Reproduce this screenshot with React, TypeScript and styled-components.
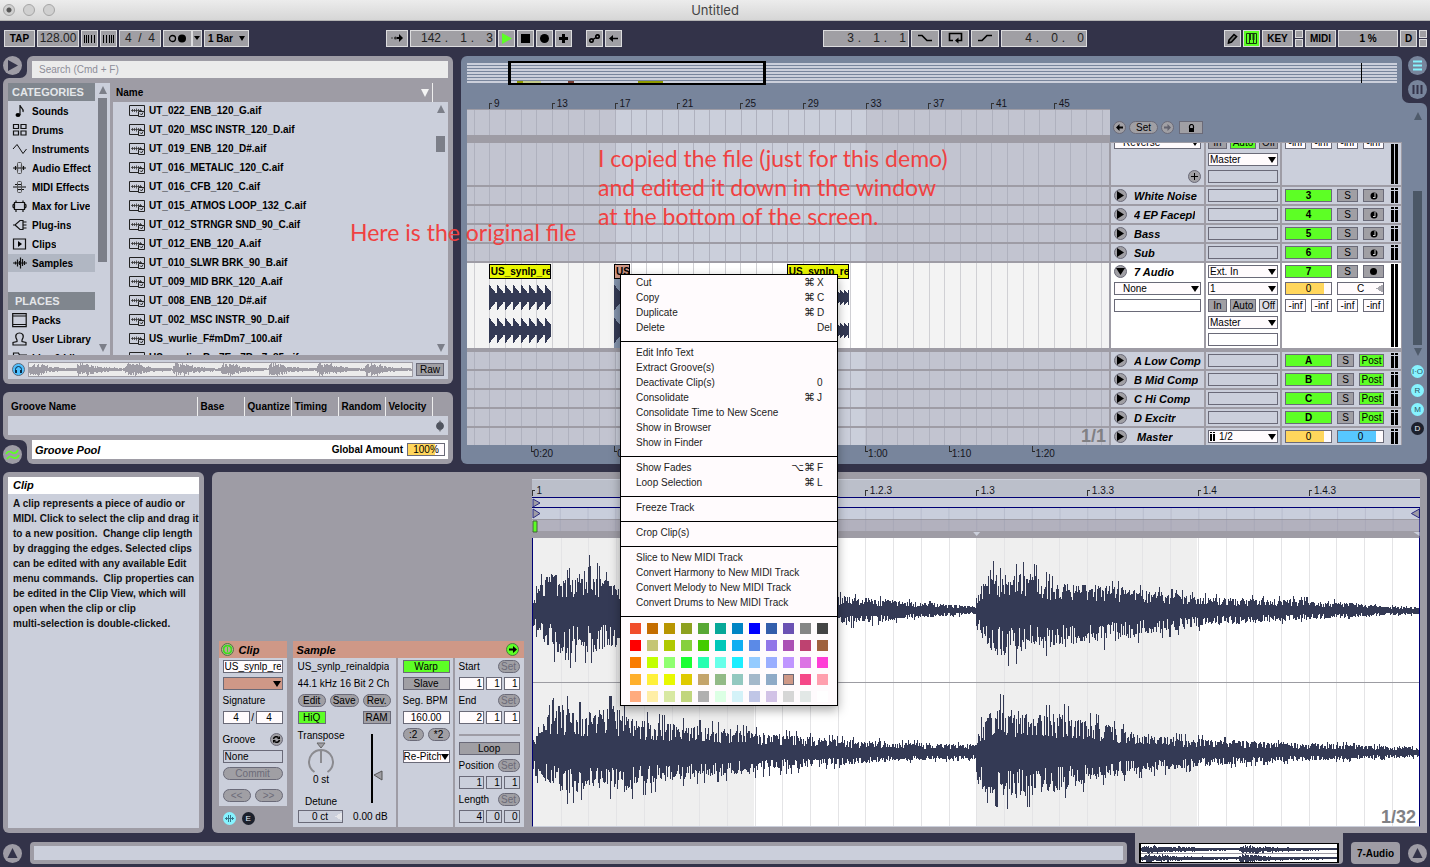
import React from "react";
import styled, { createGlobalStyle, css } from "styled-components";

const c = {
  dark: "#333349",
  panel: "#9e9ca5",
  light: "#cbcfdb",
  blue: "#78859c",
  green: "#5dff25",
  border: "#6a6a78",
  button: "#a09fa4",
  wave: "#343a55",
  clip: "#cf9887",
  yellow: "#ffd65c",
  cyan: "#86f3ff",
};

const Global = createGlobalStyle`
  *, *::before, *::after { box-sizing: border-box; }
  body { margin: 0; background: ${c.dark}; }
  body, button, input, select, textarea, table {
    font-family: "Liberation Sans", Arial, sans-serif;
    font-size: 10px;
    color: #000;
  }
  button { padding: 0; border: 0; background: none; white-space: nowrap; }
  input, select { padding: 0; border: 0; border-radius: 0; margin: 0; min-width: 0; }
  ul { list-style: none; margin: 0; padding: 0; }
  h2, h3, p { margin: 0; font-size: 10px; }
  svg { display: block; flex: none; }
`;

/* ---------- wave data ---------- */

type Points = number[][];

const random = (seed: number) => () => {
  seed = (seed * 1664525 + 1013904223) % 4294967296;
  return seed / 4294967296;
};

const at = (points: Points, x: number) => {
  for (let i = 1; i < points.length; i++) {
    const [x0, y0] = points[i - 1];
    const [x1, y1] = points[i];
    if (x <= x1) return y0 + ((y1 - y0) * (x - x0)) / (x1 - x0 || 1);
  }
  return points[points.length - 1][1];
};

const bars = (from: number, to: number, mid: number, up: Points, down: Points, seed: number) => {
  const next = random(seed);
  const jag = () => {
    const r = next();
    return r < 0.25 ? 0.3 + r * 0.6 : r > 0.93 ? 1.05 : 0.55 + 0.3 * next();
  };
  let d = "";
  for (let x = from; x < to; x++) {
    const top = Math.round(mid - at(up, x) * jag());
    const bottom = Math.round(mid + 1 + at(down, x) * jag());
    d += `M${x} ${top}h1V${bottom}h-1z`;
  }
  return d;
};

const upper: Points = [[0, 16], [8, 34], [16, 48], [30, 36], [58, 54], [70, 36], [100, 36], [150, 28], [220, 24], [300, 18], [340, 14], [380, 10], [420, 7], [443, 4], [444, 16], [452, 36], [458, 50], [466, 40], [492, 46], [503, 44], [520, 32], [580, 28], [640, 20], [680, 15], [760, 13], [820, 9], [850, 5], [888, 3]];
const lower: Points = [[0, 20], [10, 36], [33, 62], [40, 48], [60, 50], [100, 36], [150, 32], [220, 26], [300, 18], [340, 14], [380, 9], [420, 6], [443, 4], [444, 20], [452, 38], [462, 54], [480, 52], [500, 44], [540, 42], [580, 36], [620, 28], [660, 20], [720, 14], [780, 10], [850, 6], [888, 4]];
const upper2: Points = [[0, 14], [14, 42], [24, 58], [50, 46], [80, 54], [100, 40], [140, 34], [220, 24], [300, 16], [360, 12], [420, 10], [443, 9], [444, 22], [452, 40], [465, 56], [480, 52], [500, 44], [530, 46], [570, 34], [600, 24], [640, 18], [680, 15], [760, 11], [820, 9], [888, 5]];
const lower2: Points = [[0, 26], [14, 36], [30, 50], [60, 42], [90, 46], [140, 32], [220, 24], [300, 15], [360, 10], [420, 8], [443, 8], [444, 34], [452, 46], [470, 54], [510, 50], [530, 44], [580, 28], [620, 22], [680, 15], [760, 10], [820, 8], [888, 5]];

const EDITOR_WAVES = bars(0, 888, 72, upper, lower, 7) + bars(0, 888, 215, upper2, lower2, 41);

const scaled = (points: Points, sx: number, sy: number) => points.map(([x, y]) => [x * sx, y * sy]);
const MINI_WAVES =
  bars(0, 196, 5, scaled(upper, 0.22, 0.09), scaled(lower, 0.22, 0.08), 3) +
  bars(0, 196, 14, scaled(upper2, 0.22, 0.08), scaled(lower2, 0.22, 0.08), 5);

const previewEnvelope: Points = [];
for (let i = 0; i < 8; i++) {
  const x = i * 48;
  previewEnvelope.push([x, 5], [x + 2, 7], [x + 12, 6], [x + 20, 3], [x + 30, 2], [x + 47, 1]);
}
const PREVIEW_WAVE = bars(0, 383, 6, previewEnvelope, previewEnvelope, 11);

const clipWave = (width: number, flat = false) => {
  let d = "";
  for (const mid of [18, 51]) {
    for (let x = 0; x < width; x++) {
      const phase = (x % 8) / 8;
      const amp = flat && x > 50 ? 4 + ((x * 7) % 4) : 3 + Math.round(9 * Math.pow(1 - phase, 1.3));
      d += `M${x} ${mid - amp}h1V${mid + amp + 1}h-1z`;
    }
  }
  return d;
};

/* ---------- page ---------- */

const Page = styled.div`
  min-height: 100vh;
  min-width: 1240px;
  display: flex;
  flex-direction: column;
  background: ${c.dark};
  position: relative;
  overflow: hidden;
`;

const TitleBar = styled.header`
  display: grid;
  grid-template-columns: 1fr auto 1fr;
  align-items: center;
  height: 21px;
  padding: 0 3px;
  background: linear-gradient(#ececec, #d6d6d6);
  border-bottom: 1px solid #b4b4b4;
  font: 13px Inter, sans-serif;
  color: #444;
`;

const Lights = styled.div`
  display: flex;
  gap: 8px;
`;

const Light = styled.button<{ $dot?: boolean }>`
  width: 12px;
  height: 12px;
  border-radius: 50%;
  border: 1px solid #a5a5a5;
  background: ${(p) => (p.$dot ? "radial-gradient(#555 0 2px, #d0d0d0 3px)" : "#d0d0d0")};
`;

/* ---------- control bar ---------- */

const ControlBar = styled.div`
  height: 35px;
  padding: 0 3px 1px 4px;
  display: flex;
  align-items: center;
  justify-content: space-between;
`;

const Group = styled.div<{ $gap?: number }>`
  display: flex;
  gap: ${(p) => p.$gap ?? 2}px;
`;

const barBox = css`
  height: 17px;
  border: 1px solid #dcdcde;
  background: ${c.button};
`;

const BarButton = styled.button<{ $w: number; $on?: boolean }>`
  ${barBox}
  width: ${(p) => p.$w}px;
  display: flex;
  align-items: center;
  justify-content: center;
  font-weight: bold;
  ${(p) => p.$on && `background: ${c.green};`}
`;

const BarInput = styled.input<{ $w: number }>`
  ${barBox}
  width: ${(p) => p.$w}px;
  font-size: 12px;
  text-align: center;
  color: #222;
`;

const BarPosition = styled.div`
  ${barBox}
  width: 86px;
  display: grid;
  grid-template-columns: 30px 11px 15px 11px 15px;
  align-items: center;
  text-align: center;
  font-size: 12px;
  color: #222;
  input { background: none; text-align: right; font-size: 12px; color: #222; width: 100%; }
`;

const SelectWrap = styled.span<{ $w?: number; $right?: number }>`
  position: relative;
  display: block;
  width: ${(p) => (p.$w ? `${p.$w}px` : "100%")};
  &::after {
    content: "";
    position: absolute;
    right: ${(p) => p.$right ?? 2}px;
    top: 50%;
    margin-top: -3px;
    border: 4px solid transparent;
    border-top: 6px solid #000;
    border-bottom: 0;
    pointer-events: none;
  }
`;

const BarSelectWrap = styled(SelectWrap)`
  &::after { border-width: 5px 3px 0; margin-top: -2px; }
`;

const BarSelect = styled.select`
  ${barBox}
  appearance: none;
  width: 100%;
  padding-left: 3px;
  font-weight: bold;
`;

const Stack = styled.div`
  display: flex;
  flex-direction: column;
  gap: 1px;
  span { width: 8px; height: 8px; border: 1px solid #dcdcde; background: ${c.button}; }
`;

const PositionField = ({ label, values }: { label: string; values: string[] }) => (
  <BarPosition role="group" aria-label={label}>
    <input aria-label={`${label} bars`} defaultValue={values[0]} />
    <span>.</span>
    <input aria-label={`${label} beats`} defaultValue={values[1]} />
    <span>.</span>
    <input aria-label={`${label} sixteenths`} defaultValue={values[2]} />
  </BarPosition>
);

const Icon = ({ w, h, children }: { w: number; h: number; children: React.ReactNode }) => (
  <svg width={w} height={h} viewBox={`0 0 ${w} ${h}`} aria-hidden="true">{children}</svg>
);

const Transport = () => (
  <ControlBar>
    <Group>
      <BarButton $w={31}>TAP</BarButton>
      <BarInput $w={42} aria-label="Tempo" defaultValue="128.00" />
      <BarButton $w={17} aria-label="Nudge down">
        <Icon w={13} h={9}><path d="M1.5 1v8M3.5 1v8M5.5 1v8M8.5 1v8M11.5 1v8" stroke="#000" /></Icon>
      </BarButton>
      <BarButton $w={17} aria-label="Nudge up">
        <Icon w={13} h={9}><path d="M1.5 1v8M4.5 1v8M7.5 1v8M9.5 1v8M11.5 1v8" stroke="#000" /></Icon>
      </BarButton>
      <BarInput $w={42} aria-label="Time signature" defaultValue="4  /  4" />
      <Group $gap={0}>
        <BarButton $w={29} aria-label="Metronome">
          <Icon w={20} h={9}><circle cx="4.5" cy="4.5" r="3" fill="none" stroke="#000" strokeWidth="1.3" /><circle cx="14" cy="4.5" r="4" /></Icon>
        </BarButton>
        <BarButton $w={10} aria-label="Metronome options"><Icon w={6} h={4}><path d="M0 0h6L3 4z" /></Icon></BarButton>
      </Group>
      <BarSelectWrap $w={45} $right={4}>
        <BarSelect aria-label="Quantization"><option>1 Bar</option></BarSelect>
      </BarSelectWrap>
    </Group>

    <Group $gap={201}>
      <Group $gap={14}>
        <Group>
          <BarButton $w={22} aria-label="Follow">
            <Icon w={14} h={8}><circle cx="2" cy="4" r="1" fill="#666" /><circle cx="5.5" cy="4" r="1.5" fill="#333" /><path d="M7 3h2V0l4 4-4 4V5H7z" /></Icon>
          </BarButton>
          <PositionField label="Arrangement position" values={["142", "1", "3"]} />
          <BarButton $w={17} aria-label="Play"><Icon w={11} h={11}><path d="M1 0l10 5.500L1 11z" fill={c.green} /></Icon></BarButton>
          <BarButton $w={17} aria-label="Stop"><Icon w={9} h={9}><path d="M0 0h9v9H0z" /></Icon></BarButton>
          <BarButton $w={17} aria-label="Record"><Icon w={9} h={9}><circle cx="4.5" cy="4.5" r="4.5" /></Icon></BarButton>
          <BarButton $w={17} aria-label="Overdub"><Icon w={9} h={9}><path d="M3 0h3v3h3v3H6v3H3V6H0V3h3z" /></Icon></BarButton>
        </Group>
        <Group>
          <BarButton $w={17} aria-label="Automation arm">
            <Icon w={11} h={9}><circle cx="2.5" cy="6.5" r="1.7" fill="none" stroke="#000" strokeWidth="1.7" /><circle cx="8.5" cy="2.5" r="1.7" fill="none" stroke="#000" strokeWidth="1.7" /><path d="M4 5.500l3-2" stroke="#000" strokeWidth="1.5" /></Icon>
          </BarButton>
          <BarButton $w={17} aria-label="Back to arrangement">
            <Icon w={9} h={7}><path d="M0 3.500L4 0v2.700h5v1.600H4V7z" /></Icon>
          </BarButton>
        </Group>
      </Group>
      <Group>
        <PositionField label="Loop start" values={["3", "1", "1"]} />
        <BarButton $w={28} aria-label="Punch in"><Icon w={14} h={8}><path d="M0 1.500h4l5 5h5" fill="none" stroke="#000" strokeWidth="1.7" /></Icon></BarButton>
        <BarButton $w={28} aria-label="Loop">
          <Icon w={15} h={12}><path d="M5 8.500H1.500v-7h12v7H9" fill="none" stroke="#000" strokeWidth="1.6" /><path d="M7 8.500L10.500 5.500v6z" /></Icon>
        </BarButton>
        <BarButton $w={28} aria-label="Punch out"><Icon w={14} h={8}><path d="M0 6.500h4l5-5h5" fill="none" stroke="#000" strokeWidth="1.7" /></Icon></BarButton>
        <PositionField label="Loop length" values={["4", "0", "0"]} />
      </Group>
    </Group>

    <Group>
      <BarButton $w={17} aria-label="Draw mode">
        <Icon w={11} h={11}><path d="M1.500 10l.5-3L7 1.500 9.500 3.500 4.500 9z" fill="#777" stroke="#000" strokeWidth="1.6" /></Icon>
      </BarButton>
      <BarButton $w={17} $on aria-label="Computer MIDI keyboard">
        <Icon w={11} h={11}><path d="M.5.5h10v10H.5zM3.500 0v11M7.500 0v11" fill="none" stroke="#163a0c" /><path d="M3 0h2v7H3zM6.500 0h2v7h-2z" fill="#163a0c" /></Icon>
      </BarButton>
      <BarButton $w={31}>KEY</BarButton>
      <Stack><span /><span /></Stack>
      <BarButton $w={31}>MIDI</BarButton>
      <BarButton $w={60}>1 %</BarButton>
      <BarButton $w={17}>D</BarButton>
      <Stack><span /><span /></Stack>
    </Group>
  </ControlBar>
);

/* ---------- shared parts ---------- */

const UpperArea = styled.div`
  display: flex;
  gap: 8px;
  padding: 0 3px;
`;

const LeftColumn = styled.div`
  flex: 0 0 450px;
  display: flex;
  flex-direction: column;
  gap: 8px;
`;

const NotchCell = styled.div<{ $at: "top" | "bottom" }>`
  flex: 0 0 24px;
  background: ${c.panel};
  > div {
    height: 100%;
    background: ${c.dark};
    display: flex;
    align-items: ${(p) => (p.$at === "top" ? "flex-start" : "flex-end")};
    border-radius: ${(p) => (p.$at === "top" ? "0 0 7px 0" : "0 7px 0 0")};
  }
`;

const RoundButton = styled.button`
  width: 19px;
  height: 19px;
  flex: none;
  border-radius: 50%;
  background: ${c.panel};
  display: flex;
  align-items: center;
  justify-content: center;
`;

const Triangle = styled.span<{ $down?: boolean; $color?: string }>`
  display: block;
  width: 0;
  height: 0;
  border: 4px solid transparent;
  ${(p) => (p.$down
    ? `border-top: 8px solid ${p.$color ?? "#7c7f89"}; border-bottom: 0;`
    : `border-bottom: 8px solid ${p.$color ?? "#7c7f89"}; border-top: 0;`)}
`;

/* ---------- browser ---------- */

const Row = styled.div`
  display: flex;
`;

const SearchTab = styled.div`
  flex: 1;
  height: 22px;
  padding: 5px 5px 0;
  background: ${c.panel};
  border-radius: 6px 6px 0 0;
  display: flex;
`;

const Search = styled.input`
  flex: 1;
  height: 17px;
  padding: 0 7px;
  background: #ebebeb;
  &::placeholder { color: #8d8d99; opacity: 1; }
`;

const BrowserBody = styled.div`
  background: ${c.panel};
  border-radius: 6px 0 6px 6px;
  padding: 5px;
`;

const BrowserColumns = styled.div`
  display: flex;
  gap: 3px;
  height: 272px;
`;

const Categories = styled.nav`
  flex: 0 0 102px;
  display: flex;
  background: ${c.light};
  overflow: hidden;
  > div:first-child { flex: 0 0 87px; }
`;

const SectionTitle = styled.h2<{ $spaced?: boolean }>`
  height: 18px;
  line-height: 18px;
  margin-top: ${(p) => (p.$spaced ? 20 : 0)}px;
  padding-left: ${(p) => (p.$spaced ? 7 : 4)}px;
  background: #80868e;
  color: #e4e6ea;
  font-size: 11px;
`;

const Category = styled.button<{ $on?: boolean }>`
  display: flex;
  align-items: center;
  width: 87px;
  height: 18px;
  margin-top: 1px;
  padding: 0 4px;
  font-weight: bold;
  text-align: left;
  overflow: hidden;
  background: ${(p) => (p.$on ? "#b1b7c3" : "none")};
  svg { margin-right: 5px; }
  span { overflow: hidden; }
`;

const ScrollBar = styled.div`
  flex: 0 0 15px;
  display: flex;
  flex-direction: column;
  align-items: center;
  padding: 3px 0;
`;

const Thumb = styled.span<{ $h: number; $top: number }>`
  display: block;
  width: 9px;
  height: ${(p) => p.$h}px;
  margin: ${(p) => p.$top}px 0 auto;
  background: #7c7f89;
`;

const FileColumn = styled.div`
  flex: 1;
  display: flex;
  flex-direction: column;
`;

const FileHeader = styled.div`
  height: 19px;
  display: flex;
  align-items: center;
  justify-content: space-between;
  padding-left: 3px;
  font-weight: bold;
  > span { display: flex; align-items: center; gap: 3px; height: 100%; }
  > span::after { content: ""; width: 16px; height: 100%; border-left: 1px solid #eee; }
`;

const FileBody = styled.div`
  flex: 1;
  display: flex;
  min-height: 0;
  overflow: hidden;
  background: ${c.light};
  ul { flex: 1; }
`;

const File = styled.button`
  display: flex;
  align-items: center;
  gap: 4px;
  height: 19px;
  padding: 0 0 2px 16px;
  font-weight: bold;
`;

const PreviewBar = styled.div`
  display: flex;
  align-items: center;
  gap: 3px;
  height: 19px;
  margin-top: 5px;
  padding: 0 4px;
  background: ${c.light};
`;

const Headphones = styled.button`
  width: 13px;
  height: 13px;
  border-radius: 50%;
  border: 1px solid #5d6878;
  background: #4fc0ff;
  display: flex;
  align-items: center;
  justify-content: center;
`;

const PreviewWave = styled.div`
  flex: 1;
  height: 15px;
  border: 1px solid ${c.panel};
  background: #ebebeb;
  svg { width: 100%; height: 13px; }
`;

type CtlProps = { $w?: number; $tone?: "green" | "white" | "clear" | "pale"; $pill?: boolean; $dim?: boolean; $bold?: boolean };

const Control = styled.button<CtlProps>`
  width: ${(p) => (p.$w ? `${p.$w}px` : "auto")};
  ${(p) => !p.$w && "flex: 1;"}
  height: 13px;
  line-height: 11px;
  border: 1px solid ${c.border};
  border-radius: ${(p) => (p.$pill ? 7 : 0)}px;
  overflow: hidden;
  display: flex;
  align-items: center;
  justify-content: center;
  font-weight: ${(p) => (p.$bold ? "bold" : "normal")};
  color: ${(p) => (p.$dim ? "#6c6b78" : "#000")};
  background: ${(p) => ({ green: c.green, white: "#fffbfd", clear: "transparent", pale: "#dcdde6" }[p.$tone as string] ?? c.button)};
`;

const Field = styled.input<{ $w?: number; $tone?: string; $right?: boolean; $pad?: number }>`
  width: ${(p) => (p.$w ? `${p.$w}px` : "100%")};
  height: 13px;
  border: 1px solid ${c.border};
  padding: 0 ${(p) => p.$pad ?? 0}px;
  background: ${(p) => p.$tone ?? "#fffbfd"};
  text-align: ${(p) => (p.$right ? "right" : "center")};
`;

const Select = styled.select<{ $tone?: string; $pad?: number }>`
  appearance: none;
  display: block;
  width: 100%;
  height: 13px;
  border: 1px solid ${c.border};
  padding: 0 8px 0 ${(p) => p.$pad ?? 1}px;
  background: ${(p) => p.$tone ?? "#fffbfd"};
`;

const s = { fill: "none", stroke: "#111", strokeWidth: 1.2 };

const categoryIcons: Record<string, React.ReactNode> = {
  Sounds: <><ellipse cx="6" cy="12" rx="2.5" ry="2" /><path d="M8 12V2c0 3 4 3 3 7" {...s} /></>,
  Drums: <path d="M1.500 2.500h5v4h-5zM9 2.500h5v4H9zM1.500 9h5v4h-5zM9 9h5v4H9z" {...s} />,
  Instruments: <path d="M1 8l4-4.500 6 9L14.500 8" {...s} strokeWidth={1} />,
  "Audio Effects": <><path d="M1 8h13M3.500 6v4M5.500 5v6M9.500 5v6M11.500 6v4" {...s} /><rect x="5.5" y="2.5" width="4" height="11" rx="1" fill="none" stroke="#555" /></>,
  "MIDI Effects": <><path d="M3 5.500h6M1 8h13M6 10.500h6" {...s} /><rect x="5.5" y="2.5" width="4" height="11" rx="1" fill="none" stroke="#555" /></>,
  "Max for Live": <path d="M2.500 4.500h10v7h-10zM4 2.500v2M11 2.500v2M4 12v2M11 12v2M2 6L1 7v2l1 1M13 6l1 1v2l-1 1" {...s} />,
  "Plug-ins": <path d="M1 8h2l5-4.500h3v9H8L3 8M11 5h3.500M11 8h3.500M11 11h3.500" {...s} />,
  Clips: <><path d="M1.500 3h12v10h-12z" {...s} /><path d="M6 5l4 3-4 3z" /></>,
  Samples: <path d="M1 8h14M3.500 6.500v3M5.500 4.500v7M7.500 6v4M8.500 2.500v11M10.500 4v7M12.500 6v4" {...s} />,
  Packs: <path d="M.7 1.700h13.500v13H.7zM.7 4h13.500M.7 12.500h13.500" {...s} />,
  "User Library": <path d="M5 9C2 4 5 2 7.500 2s5.500 2 2.500 7v1.500l4 1v2.500H1v-2.500l4-1z" {...s} />,
  "Live 9 Library": <path d="M1.500 14V3h5l1 2h7v9z" {...s} />,
};

const CategoryItem = ({ name, on }: { name: string; on?: boolean }) => (
  <li>
    <Category $on={on}>
      <Icon w={15} h={16}>{categoryIcons[name]}</Icon>
      <span>{name}</span>
    </Category>
  </li>
);

const files = [
  "UT_022_ENB_120_G.aif", "UT_020_MSC INSTR_120_D.aif", "UT_019_ENB_120_D#.aif", "UT_016_METALIC_120_C.aif",
  "UT_016_CFB_120_C.aif", "UT_015_ATMOS LOOP_132_C.aif", "UT_012_STRNGR SND_90_C.aif", "UT_012_ENB_120_A.aif",
  "UT_010_SLWR BRK_90_B.aif", "UT_009_MID BRK_120_A.aif", "UT_008_ENB_120_D#.aif", "UT_002_MSC INSTR_90_D.aif",
  "US_wurlie_F#mDm7_100.aif", "US_wurlie_Bm7Em7Bm7_85.aif",
];

const Browser = () => (
  <section aria-label="Browser">
    <Row>
      <NotchCell $at="top">
        <div>
          <RoundButton aria-label="Hide browser"><Icon w={13} h={13}><path d="M2 1l10 5.500L2 12z" fill={c.dark} /></Icon></RoundButton>
        </div>
      </NotchCell>
      <SearchTab><Search aria-label="Search" placeholder="Search (Cmd + F)" /></SearchTab>
    </Row>
    <BrowserBody>
      <BrowserColumns>
        <Categories aria-label="Categories">
          <div>
            <SectionTitle>CATEGORIES</SectionTitle>
            <ul>
              {["Sounds", "Drums", "Instruments", "Audio Effects", "MIDI Effects", "Max for Live", "Plug-ins", "Clips", "Samples"].map((n) => (
                <CategoryItem key={n} name={n} on={n === "Samples"} />
              ))}
            </ul>
            <SectionTitle $spaced>PLACES</SectionTitle>
            <ul>
              {["Packs", "User Library", "Live 9 Library"].map((n) => <CategoryItem key={n} name={n} />)}
            </ul>
          </div>
          <ScrollBar><Triangle /><Thumb $h={164} $top={4} /><Triangle $down /></ScrollBar>
        </Categories>
        <FileColumn>
          <FileHeader>Name<span><Triangle $down $color="#f4f4f4" /></span></FileHeader>
          <FileBody>
            <ul>
              {files.map((f) => (
                <li key={f}>
                  <File>
                    <Icon w={16} h={13}>
                      <path d="M.5 1.500h15v10H.5z" fill="none" stroke="#222" />
                      <path d="M2 6.500h11M3.500 5v3M5.500 5v3M7.500 4.500v4M9.500 5v2M11.500 5v2" fill="none" stroke="#333" strokeWidth=".8" />
                      <path d="M9.500 7.500h6v5h-6z" fill={c.light} stroke="#222" />
                      <path d="M11 9.500l1.500 1.500L14 8.500" fill="none" stroke="#222" />
                    </Icon>
                    {f}
                  </File>
                </li>
              ))}
            </ul>
            <ScrollBar><Triangle /><Thumb $h={16} $top={23} /><Triangle $down /></ScrollBar>
          </FileBody>
        </FileColumn>
      </BrowserColumns>
      <PreviewBar>
        <Headphones aria-label="Preview">
          <Icon w={9} h={9}><path d="M1.500 6V4.500a3 3 0 016 0V6" fill="none" stroke="#0a2b45" /><path d="M1 5h2v3H1zM6 5h2v3H6z" fill="#0a2b45" /></Icon>
        </Headphones>
        <PreviewWave>
          <svg viewBox="0 0 383 13" preserveAspectRatio="none" shapeRendering="crispEdges" aria-hidden="true"><path d={PREVIEW_WAVE} fill={c.panel} /></svg>
        </PreviewWave>
        <Control $w={28}>Raw</Control>
      </PreviewBar>
    </BrowserBody>
  </section>
);

/* ---------- groove pool ---------- */

const GrooveBody = styled.div`
  background: ${c.panel};
  border-radius: 6px 6px 0 6px;
  padding: 5px;
`;

const GrooveTable = styled.table`
  width: 100%;
  table-layout: fixed;
  border-collapse: collapse;
  th { height: 19px; padding: 0 0 0 3px; text-align: left; border-right: 1px solid #eee; white-space: nowrap; }
  th:last-child { border: 0; }
  td { height: 19px; padding: 0; background: ${c.light}; }
  td svg { margin-left: 3px; }
`;

const GrooveTab = styled.div`
  flex: 1;
  padding: 0 5px 5px;
  background: ${c.panel};
  border-radius: 0 0 6px 6px;
  > div {
    height: 19px;
    padding: 0 3px;
    background: #fff;
    display: flex;
    align-items: center;
  }
  label { margin: 0 4px 0 auto; font-weight: bold; }
`;

const PanelName = styled.h2`
  font-size: 11px;
  font-style: italic;
`;

const GroovePool = () => (
  <section aria-label="Groove pool">
    <GrooveBody>
      <GrooveTable>
        <colgroup>
          <col width="189" /><col width="47" /><col width="47" /><col width="47" /><col width="47" /><col width="47" /><col width="16" />
        </colgroup>
        <thead>
          <tr><th>Groove Name</th><th>Base</th><th>Quantize</th><th>Timing</th><th>Random</th><th>Velocity</th><th /></tr>
        </thead>
        <tbody>
          <tr><td colSpan={6} /><td><Icon w={10} h={14}><path d="M5 1l4 6-4 6-4-6z" fill="#7c7f89" /><circle cx="5" cy="7" r="3.8" fill="#50545f" /></Icon></td></tr>
        </tbody>
      </GrooveTable>
    </GrooveBody>
    <Row>
      <NotchCell $at="bottom">
        <div>
          <RoundButton aria-label="Show groove pool">
            <Icon w={15} h={13}><path d="M1 6c3-5 6-1 7-1s3 1 5-3M2 11c3-5 6-1 7-1s3 1 5-3" fill="none" stroke="#5dff25" strokeWidth="1.7" /></Icon>
          </RoundButton>
        </div>
      </NotchCell>
      <GrooveTab>
        <div>
          <PanelName>Groove Pool</PanelName>
          <label htmlFor="global-amount">Global Amount</label>
          <Field id="global-amount" $w={38} $tone={`linear-gradient(90deg, ${c.yellow} 76%, #fffbfd 76%)`} defaultValue="100%" />
        </div>
      </GrooveTab>
    </Row>
  </section>
);

/* ---------- arrangement ---------- */

const Arrangement = styled.section`
  flex: 1;
  min-width: 0;
  display: flex;
`;

const ArrangementMain = styled.div`
  flex: 1;
  min-width: 0;
  padding: 7px 0 0 6px;
  background: ${c.blue};
  border-radius: 6px 6px 0 6px;
`;

const Overview = styled.div`
  position: relative;
  height: 20px;
  margin-right: 5px;
  background: repeating-linear-gradient(${c.light} 0 2px, ${c.blue} 2px 3px);
`;

const OverviewMark = styled.span<{ $left: number; $w: number; $color: string; $h?: number }>`
  position: absolute;
  left: ${(p) => p.$left}%;
  bottom: 0;
  width: ${(p) => p.$w}px;
  height: ${(p) => p.$h ?? 2}px;
  background: ${(p) => p.$color};
`;

const OverviewWindow = styled.div`
  position: absolute;
  left: 4.4%;
  top: -2px;
  bottom: -2px;
  width: 27.8%;
  border: solid #000;
  border-width: 2px 3px;
`;

const TimelineRow = styled.div`
  display: grid;
  grid-template-columns: 1fr 292px;
`;

const Ruler = styled.div<{ $columns: string }>`
  display: grid;
  grid-template-columns: ${(p) => p.$columns};
  align-items: end;
`;

const RulerMark = styled.span<{ $below?: boolean }>`
  position: relative;
  min-height: 10px;
  line-height: 10px;
  padding-left: 5px;
  color: #15151c;
  &::before {
    content: "";
    position: absolute;
    left: 0;
    ${(p) => (p.$below ? "top: 0; border-bottom: 1px solid #222;" : "bottom: 0; border-top: 1px solid #333;")}
    width: 3px;
    height: 6px;
    border-left: 1px solid #333;
  }
`;

const BeatRuler = styled(Ruler)`
  height: 26px;
`;

const TimeRuler = styled(Ruler)`
  height: 19px;
  align-items: start;
  padding-top: 1px;
  span { line-height: 15px; padding-left: 3px; }
`;

const laneShade = css`
  background: linear-gradient(90deg, #c2c4d0 23%, ${c.light} 23% 62%, #c2c4d0 62%);
`;

const MarkerArea = styled.div`
  position: relative;
  height: 33px;
  border-top: 1px solid ${c.panel};
  border-bottom: 7px solid ${c.panel};
  ${laneShade}
`;

const GridSvg = styled.svg`
  position: absolute;
  inset: 0;
  width: 100%;
  height: 100%;
`;

const GridLines = ({ color = "#afb1be" }: { color?: string }) => (
  <GridSvg aria-hidden="true" shapeRendering="crispEdges">
    {Array.from({ length: 41 }, (_, k) => (
      <rect key={k} x={`${((6.6 + 15.69 * k) / 642) * 100}%`} y="0" width="1" height="100%" fill={color} />
    ))}
  </GridSvg>
);

const SetRow = styled.div`
  display: flex;
  align-items: center;
  gap: 3px;
  padding: 4px 0 0 3px;
`;

const SmallRound = styled.button`
  flex: none;
  width: 13px;
  height: 13px;
  border-radius: 50%;
  border: 1px solid ${c.border};
  background: ${c.button};
  display: flex;
  align-items: center;
  justify-content: center;
`;

const LockButton = styled(Control)`
  margin-left: 2px;
`;

const Tracks = styled.div`
  display: flex;
  flex-direction: column;
  gap: 2px;
  padding: 1px 1px 0 0;
  background: ${c.panel};
`;

const Track = styled.div<{ $h: number; $selected?: boolean; $gapBelow?: boolean }>`
  display: grid;
  grid-template-columns: 1fr 93px 74px 119px;
  gap: 2px;
  height: ${(p) => p.$h}px;
  margin-bottom: ${(p) => (p.$gapBelow ? 2 : 0)}px;
  > * { background: ${(p) => (p.$selected ? "#fff" : c.light)}; }
`;

const Lane = styled.div<{ $selected?: boolean }>`
  && {
    position: relative;
    ${laneShade}
    ${(p) => p.$selected && "background: linear-gradient(90deg, #f3f3f3 23%, #fff 23% 62%, #f3f3f3 62%);"}
  }
`;

const Cell = styled.div<{ $pad: number; $end?: boolean }>`
  display: flex;
  flex-direction: column;
  gap: 4px;
  padding: 2px ${(p) => p.$pad}px;
  overflow: hidden;
  ${(p) => p.$end && "justify-content: flex-end;"}
`;

const Line = styled.div<{ $gap?: number; $between?: boolean; $end?: boolean }>`
  flex: none;
  display: flex;
  align-items: center;
  gap: ${(p) => p.$gap ?? 0}px;
  height: 13px;
  ${(p) => p.$between && "justify-content: space-between;"}
  ${(p) => p.$end && "justify-content: flex-end;"}
`;

const MixerCell = styled.div`
  display: flex;
  justify-content: space-between;
  padding: 0 3px;
  overflow: hidden;
`;

const Strip = styled(Cell)`
  width: 99px;
`;

const Meters = styled.div<{ $split?: boolean }>`
  display: flex;
  gap: 1px;
  padding: 1px 0;
  span {
    width: 3px;
    background: ${(p) => (p.$split ? `linear-gradient(#000 2px, ${c.light} 2px 3px, #000 3px)` : "#000")};
  }
`;

const TrackName = styled.span`
  font-size: 11px;
  line-height: 12px;
  font-weight: bold;
  font-style: italic;
  white-space: nowrap;
  overflow: hidden;
`;

const Fold = styled.button`
  flex: none;
  width: 13px;
  height: 13px;
  margin-right: 7px;
  border-radius: 50%;
  border: 1px solid ${c.border};
  background: ${c.button};
  display: flex;
  align-items: center;
  justify-content: center;
`;

const Box = styled.div`
  flex: 1;
  height: 13px;
  border: 1px solid ${c.border};
`;

const FoldButton = ({ open }: { open?: boolean }) => (
  <Fold aria-label={open ? "Fold track" : "Unfold track"}>
    <Icon w={9} h={9}>{open ? <path d="M0 1h9L4.500 8z" /> : <path d="M1 0l7 4.500L1 9z" />}</Icon>
  </Fold>
);

const MeterPair = ({ split }: { split?: boolean }) => <Meters $split={split} aria-hidden="true"><span /><span /></Meters>;

const Inf = () => (
  <Line $gap={5}>
    {["Peak left", "Peak right", "Send A", "Send B"].map((l) => <Field key={l} $w={21} aria-label={l} defaultValue="-inf" />)}
  </Line>
);

const MonitorButtons = ({ auto }: { auto?: boolean }) => (
  <Line $gap={3}>
    <Control $w={19}>In</Control>
    <Control $w={26} $tone={auto ? "green" : undefined}>Auto</Control>
    <Control $w={19} $tone={auto ? undefined : "pale"}>Off</Control>
  </Line>
);

const Picker = ({ label, value, tone, pad }: { label: string; value: string; tone?: string; pad?: number }) => (
  <SelectWrap>
    <Select aria-label={label} $tone={tone} $pad={pad}><option>{value}</option></Select>
  </SelectWrap>
);

const CueMeters = styled.span`
  position: absolute;
  left: 2px;
  top: 2px;
  pointer-events: none;
`;

const Clip = styled.div<{ $left: number; $w: number; $color: string; $body?: string }>`
  position: absolute;
  left: ${(p) => p.$left}%;
  top: 1px;
  bottom: 0;
  width: ${(p) => p.$w}px;
  background: ${(p) => p.$body ?? "none"};
  overflow: hidden;
  > span {
    display: block;
    height: 15px;
    line-height: 13px;
    padding-left: 1px;
    overflow: hidden;
    border: 1px solid #000;
    background: ${(p) => p.$color};
    font-weight: bold;
    white-space: nowrap;
  }
`;

const ClipBlock = ({ name, left, w, color, body, flat }: { name: string; left: number; w: number; color: string; body?: string; flat?: boolean }) => (
  <Clip $left={left} $w={w} $color={color} $body={body}>
    <span>{name}</span>
    <svg width={w} height={68} shapeRendering="crispEdges" aria-hidden="true"><path d={clipWave(w, flat)} fill={c.wave} /></svg>
  </Clip>
);

const MidiTrack = ({ name, number }: { name: string; number: string }) => (
  <Track $h={17}>
    <Lane><GridLines /></Lane>
    <Cell $pad={3}><Line><FoldButton /><TrackName>{name}</TrackName></Line></Cell>
    <Cell $pad={2}><Line><Box /></Line></Cell>
    <MixerCell>
      <Strip $pad={0}>
        <Line $gap={5}>
          <Control $w={47} $tone="green" $bold>{number}</Control>
          <Control $w={21}>S</Control>
          <Control $w={21} aria-label="Arm">
            <Icon w={8} h={8}><circle cx="4" cy="4" r="3.5" /><path d="M4.500 1v4H3v1h2.500V1z" fill="#ccc" /></Icon>
          </Control>
        </Line>
      </Strip>
      <MeterPair split />
    </MixerCell>
  </Track>
);

const ReturnTrack = ({ name, letter }: { name: string; letter: string }) => (
  <Track $h={17}>
    <Lane><GridLines /></Lane>
    <Cell $pad={3}><Line><FoldButton /><TrackName>{name}</TrackName></Line></Cell>
    <Cell $pad={2}><Line><Box /></Line></Cell>
    <MixerCell>
      <Strip $pad={0}>
        <Line $gap={5}>
          <Control $w={47} $tone="green" $bold>{letter}</Control>
          <Control $w={17}>S</Control>
          <Control $w={25} $tone="green">Post</Control>
        </Line>
      </Strip>
      <MeterPair split />
    </MixerCell>
  </Track>
);

const ZoomLabel = styled.span`
  position: absolute;
  right: 3px;
  bottom: 0;
  line-height: 18px;
  font-size: 18px;
  font-weight: bold;
  color: #808084;
`;

const Rail = styled.div`
  flex: 0 0 25px;
  display: flex;
  flex-direction: column;
`;

const RailNotch = styled.div`
  background: ${c.blue};
  > div {
    height: 47px;
    display: flex;
    flex-direction: column;
    align-items: flex-end;
    gap: 5px;
    background: ${c.dark};
    border-radius: 0 0 0 7px;
  }
`;

const RailBody = styled.div`
  flex: 1;
  display: flex;
  flex-direction: column;
  align-items: center;
  padding: 9px 0 29px 6px;
  background: ${c.blue};
  border-radius: 0 6px 6px 0;
`;

const RailThumb = styled.span`
  width: 9px;
  height: 154px;
  margin: 71px 0 3px;
  background: #4b5766;
`;

const RailToggles = styled.div`
  display: flex;
  flex-direction: column;
  gap: 6px;
  margin-top: auto;
`;

const Badge = styled.button<{ $dark?: boolean }>`
  width: 13px;
  height: 13px;
  border-radius: 50%;
  font-size: 8px;
  line-height: 13px;
  display: flex;
  align-items: center;
  justify-content: center;
  color: ${(p) => (p.$dark ? "#e8eef5" : "#2c5565")};
  background: ${(p) => (p.$dark ? "#1c202c" : c.cyan)};
`;

const BlueRound = styled(RoundButton)`
  background: ${c.blue};
`;

const ArrangementView = () => (
  <Arrangement aria-label="Arrangement">
    <ArrangementMain>
      <Overview>
        <OverviewMark $left={5.4} $w={6} $color="#8f9a00" />
        <OverviewMark $left={6} $w={18} $color="#c3ca8a" />
        <OverviewMark $left={10.9} $w={6} $color="#7a3f35" />
        <OverviewMark $left={18.4} $w={25} $color="#8f9a00" />
        <OverviewMark $left={96.1} $w={1} $h={20} $color="#000" />
        <OverviewWindow />
      </Overview>
      <TimelineRow>
        <BeatRuler $columns="88fr repeat(9, 251fr) 225fr">
          <span />
          {["9", "13", "17", "21", "25", "29", "33", "37", "41", "45"].map((n) => <RulerMark key={n}>{n}</RulerMark>)}
        </BeatRuler>
      </TimelineRow>
      <TimelineRow>
        <MarkerArea><GridLines /></MarkerArea>
        <SetRow>
          <SmallRound aria-label="Previous locator"><Icon w={9} h={7}><path d="M1 3.500L4.500 0v2.500H8v2H4.500V7z" /></Icon></SmallRound>
          <Control $w={29} $pill>Set</Control>
          <SmallRound aria-label="Next locator"><Icon w={9} h={7}><path d="M8 3.500L4.500 0v2.500H1v2h3.500V7z" fill="#62626e" /></Icon></SmallRound>
          <LockButton $w={24} aria-label="Lock envelopes">
            <Icon w={7} h={8}><path d="M1 4h5v4H1z" /><path d="M1.500 4V2.500a2 2 0 014 0V4" fill="none" stroke="#000" strokeWidth="1.2" /></Icon>
          </LockButton>
        </SetRow>
      </TimelineRow>
      <Tracks>
        <Track $h={42}>
          <Lane><GridLines /></Lane>
          <Cell $pad={3} $end>
            <Line><Picker label="Device" value="Reverse" pad={8} /></Line>
            <Line />
            <Line $end><SmallRound aria-label="Add lane"><Icon w={7} h={7}><path d="M3 0h1v3h3v1H4v3H3V4H0V3h3z" /></Icon></SmallRound></Line>
          </Cell>
          <Cell $pad={2} $end>
            <MonitorButtons auto />
            <Line><Picker label="Output" value="Master" /></Line>
            <Line><Box /></Line>
          </Cell>
          <MixerCell>
            <Strip $pad={0} $end><Inf /><Line /><Line /></Strip>
            <MeterPair />
          </MixerCell>
        </Track>
        <MidiTrack name="White Noise" number="3" />
        <MidiTrack name="4 EP Facepl" number="4" />
        <MidiTrack name="Bass" number="5" />
        <MidiTrack name="Sub" number="6" />
        <Track $h={85} $selected $gapBelow>
          <Lane $selected>
            <GridLines color="#d0d0d4" />
            <ClipBlock name="US_synlp_re" left={3.4} w={62} color="#e9f600" />
            <ClipBlock name="US" left={22.9} w={16} color={c.clip} body="#8494ad" />
            <ClipBlock name="US_synlp_re" left={49.8} w={62} color="#e9f600" flat />
          </Lane>
          <Cell $pad={3}>
            <Line><FoldButton open /><TrackName>7 Audio</TrackName></Line>
            <Line><Picker label="Device" value="None" pad={8} /></Line>
            <Line><Box /></Line>
          </Cell>
          <Cell $pad={2}>
            <Line><Picker label="Input" value="Ext. In" /></Line>
            <Line><Picker label="Input channel" value="1" /></Line>
            <MonitorButtons />
            <Line><Picker label="Output" value="Master" /></Line>
            <Line><Box /></Line>
          </Cell>
          <MixerCell>
            <Strip $pad={0}>
              <Line $gap={5}>
                <Control $w={47} $tone="green" $bold>7</Control>
                <Control $w={21}>S</Control>
                <Control $w={21} aria-label="Arm"><Icon w={7} h={7}><circle cx="3.5" cy="3.5" r="3.5" /></Icon></Control>
              </Line>
              <Line $gap={5}>
                <Field $w={47} aria-label="Volume" $tone={`linear-gradient(90deg, ${c.yellow} 84%, #fffbfd 84%)`} defaultValue="0" />
                <Field $w={47} aria-label="Pan" $tone="conic-gradient(from 60deg at 38px 50%, #a9a8ae 60deg, #fffbfd 60deg)" $pad={3} defaultValue="C" />
              </Line>
              <Inf />
            </Strip>
            <MeterPair />
          </MixerCell>
        </Track>
        <ReturnTrack name="A Low Comp" letter="A" />
        <ReturnTrack name="B Mid Comp" letter="B" />
        <ReturnTrack name="C Hi Comp" letter="C" />
        <ReturnTrack name="D Excitr" letter="D" />
        <Track $h={17}>
          <Lane><GridLines /><ZoomLabel>1/1</ZoomLabel></Lane>
          <Cell $pad={3}><Line><FoldButton /><TrackName>&nbsp;Master</TrackName></Line></Cell>
          <Cell $pad={2}>
            <Line>
              <SelectWrap>
                <Select aria-label="Cue out" $pad={10}><option>1/2</option></Select>
                <CueMeters><Icon w={6} h={9}><path d="M0 0h2v1H0zM3 0h2v1H3zM0 2h2v7H0zM3 2h2v7H3z" /></Icon></CueMeters>
              </SelectWrap>
            </Line>
          </Cell>
          <MixerCell>
            <Strip $pad={0}>
              <Line $gap={5}>
                <Field $w={47} aria-label="Master volume" $tone={`linear-gradient(90deg, ${c.yellow} 84%, #fffbfd 84%)`} defaultValue="0" />
                <Field $w={47} aria-label="Cue volume" $tone="linear-gradient(90deg, #57c7ff 84%, #fffbfd 84%)" defaultValue="0" />
              </Line>
            </Strip>
            <MeterPair split />
          </MixerCell>
        </Track>
      </Tracks>
      <TimelineRow>
        <TimeRuler $columns="127fr repeat(6, 167fr) 155fr">
          <span />
          {["0:20", "0:30", "", "", "1:00", "1:10", "1:20"].map((t, i) => <RulerMark $below key={i}>{t}</RulerMark>)}
        </TimeRuler>
      </TimelineRow>
    </ArrangementMain>
    <Rail>
      <RailNotch>
        <div>
          <BlueRound aria-label="Arrangement view"><Icon w={11} h={11}><path d="M1 1.500h9M1 5.500h9M1 9.500h9" stroke={c.cyan} strokeWidth="2" /></Icon></BlueRound>
          <BlueRound aria-label="Session view"><Icon w={11} h={11}><path d="M1.500 1v9M5.500 1v9M9.500 1v9" stroke={c.dark} strokeWidth="2" /></Icon></BlueRound>
        </div>
      </RailNotch>
      <RailBody>
        <Triangle $color="#4f5b6b" />
        <RailThumb />
        <Triangle $down $color="#4f5b6b" />
        <RailToggles>
          <Badge>I·O</Badge><Badge>R</Badge><Badge>M</Badge><Badge $dark>D</Badge>
        </RailToggles>
      </RailBody>
    </Rail>
  </Arrangement>
);

/* ---------- lower area ---------- */

const LowerArea = styled.div`
  flex: 1;
  display: flex;
  gap: 8px;
  padding: 8px 3px 0;
`;

const InfoPanel = styled.aside`
  flex: 0 0 200px;
  display: flex;
  flex-direction: column;
  padding: 5px;
  background: ${c.panel};
  border-radius: 6px;
  h2 { height: 17px; line-height: 17px; padding-left: 5px; background: #fff; }
  p { flex: 1; padding: 2px 0 0 5px; line-height: 15px; font-weight: bold; color: #111; background: ${c.light}; white-space: pre; }
`;

const DetailPanel = styled.section`
  flex: 1;
  min-width: 0;
  display: flex;
  align-items: flex-end;
  padding: 7px 7px 6px;
  background: ${c.panel};
  border-radius: 6px 6px 0 6px;
`;

const ClipColumn = styled.div`
  flex: 0 0 68px;
  margin-right: 6px;
`;

const BoxTitle = styled.h2`
  display: flex;
  align-items: center;
  height: 17px;
  padding: 0 5px 0 2px;
  gap: 5px;
  background: ${c.clip};
  font-size: 11px;
  font-style: italic;
`;

const ClipBody = styled.div`
  display: flex;
  flex-direction: column;
  gap: 9px;
  padding: 2px 4px 4px;
  background: ${c.light};
`;

const Rows = styled.div`
  display: flex;
  flex-direction: column;
  gap: 4px;
`;

const GreenRound = styled.button<{ $ring?: boolean }>`
  width: 13px;
  height: 13px;
  border-radius: 50%;
  border: 1px solid #4c7a40;
  background: ${(p) => (p.$ring ? "#b9aa95" : c.green)};
  display: flex;
  align-items: center;
  justify-content: center;
`;

const ClipToggles = styled.div`
  display: flex;
  gap: 6px;
  padding: 6px 4px 2px;
`;

const SampleBox = styled.div`
  flex: 0 0 231px;
  margin-right: 8px;
  ${BoxTitle} { padding-left: 4px; justify-content: space-between; }
`;

const SampleBody = styled.div`
  display: grid;
  grid-template-columns: 103px 57px 71px;
  height: 169px;
  background: ${c.light};
  > div { padding: 2px 5px 0; }
  > div + div { border-left: 2px solid ${c.panel}; padding: 2px 4px 0 4px; }
  > div:nth-child(2) { padding: 2px 3px 0 5px; }
`;

const Clipped = styled.span`
  overflow: hidden;
  white-space: nowrap;
`;

const PitchRow = styled.div`
  display: flex;
  justify-content: space-between;
  height: 85px;
  padding: 6px 8px 0 0;
  > div { display: flex; flex-direction: column; align-items: center; }
`;

const Gain = styled.div`
  padding-top: 4px;
`;

const Detune = styled.span`
  margin-top: 11px;
`;

const BottomLine = styled(Line)`
  justify-content: space-between;
  margin-top: 1px;
  padding-right: 3px;
`;

const WarpLine = styled(Line)`
  margin-top: 5px;
`;

const Divider = styled.hr`
  width: 100%;
  height: 2px;
  margin: 6px 0 2px;
  border: 0;
  background: ${c.panel};
`;

const Editor = styled.div`
  flex: 1;
  min-width: 0;
  align-self: stretch;
  display: flex;
  flex-direction: column;
  border-top: 1px solid ${c.light};
`;

const EditorRuler = styled(Ruler)`
  height: 18px;
  padding-bottom: 1px;
  background: #bbbfca;
  border-bottom: 1px solid #000074;
`;

const Strips = styled.div`
  height: 40px;
  background: linear-gradient(${c.light} 0 9px, #000074 9px 10px, #c9cedc 10px 21px, ${c.panel} 21px 22px, #b2b1be 22px 33px, ${c.panel} 33px);
  svg { width: 100%; height: 40px; }
`;

const WaveArea = styled.div`
  position: relative;
  flex: 1;
  min-height: 289px;
  background: linear-gradient(90deg, #efefef 25%, #fff 25% 50%, #efefef 50% 75%, #fff 75%);
  border-left: 1px solid #000074;
  border-right: 1px solid #000074;
  border-bottom: 1px solid ${c.light};
`;

const SetButton = () => <Control $w={22} $pill $dim>Set</Control>;

const Triplet = ({ label, values, tone }: { label: string; values: string[]; tone?: string }) => (
  <Line $gap={2}>
    <Field $w={26} $right $pad={1} $tone={tone} aria-label={`${label} bar`} defaultValue={values[0]} />
    <Field $w={16} $right $pad={1} $tone={tone} aria-label={`${label} beat`} defaultValue={values[1]} />
    <Field $w={16} $right $pad={1} $tone={tone} aria-label={`${label} sixteenth`} defaultValue={values[2]} />
  </Line>
);

const GroovePicker = () => <Select aria-label="Groove" $tone="transparent"><option>None</option></Select>;

const ClipBox = () => (
  <ClipColumn>
    <BoxTitle>
      <GreenRound $ring aria-label="Clip activator"><Icon w={9} h={9}><circle cx="4.5" cy="4.5" r="4" fill="none" stroke="#3ae01b" strokeWidth="1.8" /><path d="M4 2h1v5H4z" fill="#3ae01b" /></Icon></GreenRound>
      Clip
    </BoxTitle>
    <ClipBody>
      <Rows>
        <Line><Field $pad={1} aria-label="Clip name" defaultValue="US_synlp_re" /></Line>
        <Line><Picker label="Clip color" value="" tone={c.clip} /></Line>
        <Line>Signature</Line>
        <Line $between>
          <Field $w={27} aria-label="Numerator" defaultValue="4" />/<Field $w={27} aria-label="Denominator" defaultValue="4" />
        </Line>
      </Rows>
      <Rows>
        <Line $between>
          Groove
          <SmallRound aria-label="Hot-swap groove"><Icon w={9} h={9}><path d="M1.500 4A3 3 0 016.500 2.500M7.500 5a3 3 0 01-5 1.500" fill="none" stroke="#000" strokeWidth="1.5" /><path d="M5 4h3V1zM4 5H1v3z" /></Icon></SmallRound>
        </Line>
        <Line><GroovePicker /></Line>
        <Line><Control $pill $dim>Commit</Control></Line>
      </Rows>
      <Line $between>
        <Control $w={28} $pill $dim>&lt;&lt;</Control>
        <Control $w={28} $pill $dim>&gt;&gt;</Control>
      </Line>
    </ClipBody>
    <ClipToggles>
      <Badge aria-label="Sample box"><Icon w={11} h={9}><path d="M1 4.500h9M2.500 3v3M4.500 1v7M6.500 1v7M8.500 3v3" stroke="#39768a" /></Icon></Badge>
      <Badge $dark>E</Badge>
    </ClipToggles>
  </ClipColumn>
);

const SamplePanel = () => (
  <SampleBox>
    <BoxTitle>
      Sample
      <GreenRound aria-label="Show editor"><Icon w={9} h={7}><path d="M9 3.500L5 0v2.500H1v2h4V7z" /></Icon></GreenRound>
    </BoxTitle>
    <SampleBody>
      <div>
        <Rows>
          <Line><Clipped>US_synlp_reinaldpia</Clipped></Line>
          <Line><Clipped>44.1 kHz 16 Bit 2 Ch</Clipped></Line>
          <Line $between><Control $w={28} $pill>Edit</Control><Control $w={29} $pill>Save</Control><Control $w={28} $pill>Rev.</Control></Line>
          <Line $between><Control $w={28} $tone="green">HiQ</Control><Control $w={28}>RAM</Control></Line>
        </Rows>
        <PitchRow>
          <div>
            <span>Transpose</span>
            <Icon w={30} h={33}>
              <path d="M11 2h8l-4 5z" fill={c.button} stroke="#666" />
              <path d="M8.500 31a12 12 0 1113 0M15 9v13" fill="none" stroke="#8b8b90" strokeWidth="2" />
            </Icon>
            <span>0 st</span>
            <Detune>Detune</Detune>
          </div>
          <Gain>
            <Icon w={12} h={69}><path d="M0 0h2v69H0z" /><path d="M3 41l8-4v9z" fill={c.button} stroke="#555" /></Icon>
          </Gain>
        </PitchRow>
        <BottomLine>
          <Field $w={45} aria-label="Detune" $tone="conic-gradient(from 60deg at 36px 50%, #e6e6ea 60deg, transparent 60deg)" $pad={3} defaultValue="0 ct" />
          <span>0.00 dB</span>
        </BottomLine>
      </div>
      <div>
        <Rows>
          <Line><Control $tone="green">Warp</Control></Line>
          <Line><Control>Slave</Control></Line>
          <Line><Clipped>Seg. BPM</Clipped></Line>
          <Line><Field aria-label="Segment BPM" defaultValue="160.00" /></Line>
          <Line $between><Control $w={21} $pill>:2</Control><Control $w={22} $pill>*2</Control></Line>
          <WarpLine><SelectWrap $right={1}><Select aria-label="Warp mode" $pad={0}><option>Re-Pitch</option></Select></SelectWrap></WarpLine>
        </Rows>
      </div>
      <div>
        <Rows>
          <Line $between>Start<SetButton /></Line>
          <Triplet label="Start" values={["1", "1", "1"]} />
          <Line $between>End<SetButton /></Line>
          <Triplet label="End" values={["2", "1", "1"]} />
          <Divider />
          <Line><Control>Loop</Control></Line>
          <Line $between>Position<SetButton /></Line>
          <Triplet label="Position" values={["1", "1", "1"]} tone="transparent" />
          <Line $between>Length<SetButton /></Line>
          <Triplet label="Length" values={["4", "0", "0"]} tone="transparent" />
        </Rows>
      </div>
    </SampleBody>
  </SampleBox>
);

const editorGrid = Array.from({ length: 31 }, (_, i) => ((i + 1) * 100) / 32);

const WaveEditor = () => (
  <Editor>
    <EditorRuler $columns="repeat(8, 1fr)">
      {["1", "", "", "1.2.3", "1.3", "1.3.3", "1.4", "1.4.3"].map((t, i) => <RulerMark key={i}>{t}</RulerMark>)}
    </EditorRuler>
    <Strips>
      <svg aria-hidden="true">
        {editorGrid.map((x) => <rect key={x} x={`${x}%`} y="10" width="1" height="23" fill="#8a8fa8" opacity=".25" />)}
        <path d="M1 1l7 4-7 4zM1 11l7 4.500L1 20z" fill={c.panel} stroke="#2b2b80" />
        <path d="M1 23h4v11H1z" fill={c.green} stroke="#44603c" />
        <svg x="50%" overflow="visible"><path d="M-3 34h7L.5 38z" fill={c.light} /></svg>
        <svg x="100%" overflow="visible"><path d="M-1 11l-8 4.500 8 4.500z" fill={c.panel} stroke="#2b2b80" /><path d="M-.5 10v30" stroke="#000074" /><path d="M-7 34h6v4z" fill={c.light} /></svg>
      </svg>
    </Strips>
    <WaveArea>
      <GridSvg aria-hidden="true" shapeRendering="crispEdges">
        {editorGrid.map((x) => <rect key={x} x={`${x}%`} y="0" width="1" height="100%" fill="#e4e4e6" />)}
        <rect x="0" y="50%" width="100%" height="1" fill="#9c9ca2" />
      </GridSvg>
      <GridSvg viewBox="0 0 888 289" preserveAspectRatio="none" shapeRendering="crispEdges" role="img" aria-label="Sample waveform">
        <path d={EDITOR_WAVES} fill={c.wave} />
      </GridSvg>
      <ZoomLabel>1/32</ZoomLabel>
    </WaveArea>
  </Editor>
);

/* ---------- status bar ---------- */

const StatusBar = styled.footer`
  display: flex;
  align-items: flex-end;
  gap: 8px;
  height: 34px;
  padding: 0 3px 3px;
`;

const StatusField = styled.div`
  flex: 1;
  height: 22px;
  border: 4px solid ${c.panel};
  border-radius: 4px;
  background: ${c.light};
`;

const OverviewTab = styled.div`
  align-self: stretch;
  flex: 0 0 208px;
  padding: 10px 4px 0;
  background: ${c.panel};
  border-radius: 0 0 4px 4px;
  > div { height: 20px; border: solid #000; border-width: 1px 2px; background: #fff; }
`;

const TrackTab = styled.button`
  width: 49px;
  height: 22px;
  border-radius: 4px;
  background: ${c.panel};
  font-weight: bold;
`;

const UpRound = styled(RoundButton)`
  margin-bottom: 1px;
`;

const UpIcon = () => <Icon w={11} h={11}><path d="M5.500 0l5 10h-10z" fill={c.dark} /></Icon>;

/* ---------- context menu ---------- */

const Menu = styled.div`
  position: absolute;
  left: 620px;
  top: 274px;
  width: 218px;
  border: 1px solid #000;
  background: #fffbfd;
  box-shadow: 0 4px 10px rgba(0, 0, 0, 0.35);
`;

const MenuSection = styled.div`
  padding: 4px 0 5px;
  &:first-child { padding-top: 1px; }
  & + & { border-top: 1px solid #000; }
`;

const MenuItem = styled.button`
  display: grid;
  grid-template-columns: 1fr auto 20px;
  gap: 2px;
  width: 100%;
  height: 15px;
  line-height: 14px;
  padding-left: 15px;
  text-align: left;
  color: #1c1c1c;
  kbd { font: inherit; line-height: 14px; }
  kbd:nth-child(2) { font-family: "DejaVu Sans", sans-serif; font-size: 11px; }
`;

const Palette = styled.div`
  display: grid;
  grid-template-columns: repeat(12, 11px);
  gap: 6px;
  padding: 6px 9px 3px;
  border-top: 1px solid #000;
`;

const Swatch = styled.button<{ $color: string; $on?: boolean }>`
  height: 11px;
  background: ${(p) => p.$color};
  ${(p) => p.$on && `border: 1px solid ${c.border};`}
`;

const menu: string[][][] = [
  [["Cut", "⌘", "X"], ["Copy", "⌘", "C"], ["Duplicate", "⌘", "D"], ["Delete", "", "Del"]],
  [["Edit Info Text"], ["Extract Groove(s)"], ["Deactivate Clip(s)", "", "0"], ["Consolidate", "⌘", "J"], ["Consolidate Time to New Scene"], ["Show in Browser"], ["Show in Finder"]],
  [["Show Fades", "⌥⌘", "F"], ["Loop Selection", "⌘", "L"]],
  [["Freeze Track"]],
  [["Crop Clip(s)"]],
  [["Slice to New MIDI Track"], ["Convert Harmony to New MIDI Track"], ["Convert Melody to New MIDI Track"], ["Convert Drums to New MIDI Track"]],
];

const colors = (
  "#f14d2b #c46c00 #b89400 #8ea01f #59a735 #08a798 #0084c4 #0000ff #335dab #6b51b3 #858585 #444444 " +
  "#ff0000 #c5c574 #b0c800 #86d03d #44cc00 #00c7b9 #10aef2 #5b8ae7 #9176e8 #ab51b5 #be4270 #9f613d " +
  "#f97b00 #c2ff00 #90ff70 #1aff33 #28ffb0 #68ffe9 #1ceeff #94cbff #9aaeff #c095ff #dc73e4 #ff3dd6 " +
  "#ffae2c #fff03a #e8f800 #dfca00 #c4a46b #93ba87 #93c8c0 #a4b8ca #8faac7 #cf9887 #f54788 #ff9fae " +
  "#ffab7e #ffeea6 #d8e8a2 #c1d67d #b0b0b0 #dcffe4 #d4f2f8 #c0c6e6 #d2c2e6 #d6d6d6 #e2e8e6 #ffffff"
).split(" ");

const ContextMenu = () => (
  <Menu role="menu" aria-label="Clip menu">
    {menu.map((section, i) => (
      <MenuSection key={i}>
        {section.map(([label, mod, key]) => (
          <MenuItem key={label} role="menuitem"><span>{label}</span><kbd>{mod}</kbd><kbd>{key}</kbd></MenuItem>
        ))}
      </MenuSection>
    ))}
    <Palette>
      {colors.map((color) => <Swatch key={color} $color={color} $on={color === "#cf9887"} aria-label={`Color ${color}`} />)}
    </Palette>
  </Menu>
);

const Note = styled.p<{ $left: number; $top: number }>`
  position: absolute;
  left: ${(p) => p.$left}px;
  top: ${(p) => p.$top}px;
  font: 23px/29px Lato, sans-serif;
  color: #f04141;
  white-space: pre;
`;

const INFO = `A clip represents a piece of audio or
MIDI. Click to select the clip and drag it
to a new position.\u00a0 Change clip length
by dragging the edges. Selected clips
can be edited with any available Edit
menu commands.\u00a0 Clip properties can
be edited in the Clip View, which will
open when the clip or clip
multi-selection is double-clicked.`;

export default function App() {
  return (
    <Page>
      <Global />
      <TitleBar>
        <Lights><Light $dot aria-label="Close" /><Light aria-label="Minimize" /><Light aria-label="Zoom" /></Lights>
        <span>Untitled</span>
      </TitleBar>
      <Transport />
      <UpperArea>
        <LeftColumn><Browser /><GroovePool /></LeftColumn>
        <ArrangementView />
      </UpperArea>
      <LowerArea>
        <InfoPanel><PanelName>Clip</PanelName><p>{INFO}</p></InfoPanel>
        <DetailPanel aria-label="Clip view"><ClipBox /><SamplePanel /><WaveEditor /></DetailPanel>
      </LowerArea>
      <StatusBar>
        <UpRound aria-label="Hide info view"><UpIcon /></UpRound>
        <StatusField role="status" />
        <OverviewTab>
          <div>
            <svg width="100%" height="18" viewBox="0 0 196 18" preserveAspectRatio="none" shapeRendering="crispEdges" aria-hidden="true">
              <path d="M0 9h196v1H0z" fill={c.panel} />
              <path d="M0 4h196v2H0zM0 13h196v2H0z" fill={c.wave} />
              <path d={MINI_WAVES} fill={c.wave} />
            </svg>
          </div>
        </OverviewTab>
        <TrackTab>7-Audio</TrackTab>
        <UpRound aria-label="Hide detail view"><UpIcon /></UpRound>
      </StatusBar>
      <Note $left={598} $top={144}>{"I copied the file (just for this demo)\nand edited it down in the window\nat the bottom of the screen."}</Note>
      <Note $left={350} $top={218}>Here is the original file</Note>
      <ContextMenu />
    </Page>
  );
}
